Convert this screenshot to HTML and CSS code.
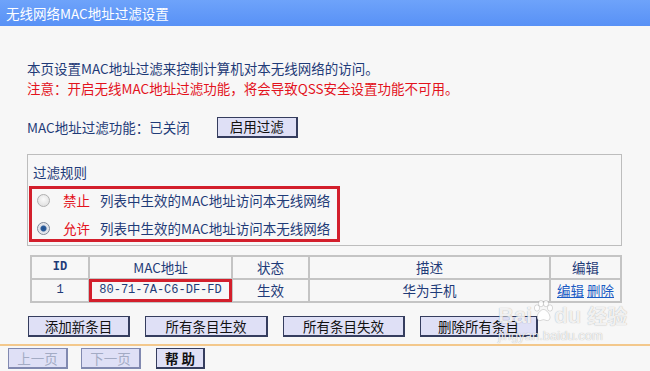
FILE: index.html
```html
<!DOCTYPE html>
<html lang="zh-CN">
<head>
    <meta charset="UTF-8" />
    <title>无线网络MAC地址过滤设置</title>
    <link rel="stylesheet" href="styles.css">
</head>
<body>
    <div class="title-bar">无线网络MAC地址过滤设置</div>

    <div class="content">
        <p class="intro">本页设置MAC地址过滤来控制计算机对本无线网络的访问。</p>
        <p class="warn">注意：开启无线MAC地址过滤功能，将会导致QSS安全设置功能不可用。</p>

        <div class="status-row">
            <span>MAC地址过滤功能：已关闭</span>
            <button class="btn btn-enable">启用过滤</button>
        </div>

        <div class="rules">
            <div class="rules-title">过滤规则</div>
            <div class="rules-options">
                <label class="opt"><span class="radio"></span><span class="verb">禁止</span>列表中生效的MAC地址访问本无线网络</label>
                <label class="opt"><span class="radio checked"></span><span class="verb">允许</span>列表中生效的MAC地址访问本无线网络</label>
            </div>
        </div>

        <table class="mac-table">
            <tr>
                <th class="col-id mono">ID</th>
                <th class="col-mac">MAC地址</th>
                <th class="col-state">状态</th>
                <th class="col-desc">描述</th>
                <th class="col-edit">编辑</th>
            </tr>
            <tr>
                <td class="mono">1</td>
                <td class="mono mark">80-71-7A-C6-DF-FD</td>
                <td>生效</td>
                <td>华为手机</td>
                <td><a href="#">编辑</a> <a href="#">删除</a></td>
            </tr>
        </table>

        <div class="actions">
            <button class="btn btn-add">添加新条目</button>
            <button class="btn btn-on">所有条目生效</button>
            <button class="btn btn-off">所有条目失效</button>
            <button class="btn btn-del">删除所有条目</button>
        </div>
    </div>

    <div class="footer">
        <button class="btn btn-page" disabled>上一页</button>
        <button class="btn btn-page" disabled>下一页</button>
        <button class="btn btn-help">帮 助</button>
    </div>

    <!-- watermark from the source picture -->
    <div class="watermark">
        <div class="wm-brand">
            <span>Bai</span>
            <svg class="paw" width="22" height="22" viewBox="0 0 22 22">
                <ellipse cx="5" cy="8" rx="2.6" ry="3.2" />
                <ellipse cx="9" cy="3.6" rx="2.6" ry="3.2" />
                <ellipse cx="14" cy="3.6" rx="2.6" ry="3.2" />
                <ellipse cx="18" cy="8" rx="2.6" ry="3.2" />
                <path d="M11.5 9.5c-3 0-6.5 4.5-6.5 8 0 2.5 2 3.5 3.5 3 1.3-.4 2-.8 3-.8s1.7.4 3 .8c1.5.5 3.5-.5 3.5-3 0-3.5-3.5-8-6.5-8z" />
            </svg>
            <span>du</span>
            <span class="wm-cn">经验</span>
        </div>
        <div class="wm-url">jingyan.baidu.com</div>
    </div>
</body>
</html>
```

FILE: styles.css
```css
:root {
    --navy: #1f3b78;
    --red: #e3121c;
    --mark: #d31f2c;
    --grid: #c4c4c4;
    --btn-bg: #dfe0f6;
    --btn-border: #353d5e;
}

body {
    margin: 0;
    background: #f7f7f7;
    font-family: "Noto Sans CJK SC", "Noto Sans", sans-serif;
    font-size: 13.5px;
    color: var(--navy);
    position: relative;
    overflow: hidden;
}

.title-bar {
    height: 26px;
    line-height: 26px;
    padding-left: 6px;
    color: #fff;
    background: linear-gradient(#6ea3fa, #5891f6);
}

.content {
    padding: 32px 0 7px 27px;
}

p {
    margin: 0;
    line-height: 20px;
}

.warn {
    color: var(--red);
}

.status-row {
    display: flex;
    align-items: center;
    gap: 27px;
    margin-top: 19px;
    height: 20px;
}

/* buttons */
.btn {
    box-sizing: border-box;
    height: 21px;
    padding: 0;
    font-family: "Noto Sans CJK SC", sans-serif;
    font-size: 13.5px;
    line-height: 17px;
    color: #111;
    background: var(--btn-bg);
    border: 1px solid var(--btn-border);
    border-width: 1px 2px 2px 1px;
}

.btn-enable { width: 81px; }

/* filter rules box */
.rules {
    box-sizing: border-box;
    width: 595px;
    margin-top: 17px;
    padding: 7px 0 3px 1px;
    border: 1px solid #bdbdbd;
}

.rules-title {
    padding-left: 4px;
    line-height: 20px;
}

.rules-options {
    box-sizing: border-box;
    width: 311px;
    margin-top: 4px;
    border: 3px solid var(--mark);
    display: flex;
    flex-direction: column;
    gap: 6px;
}

.opt {
    display: flex;
    align-items: center;
    height: 22px;
    padding-left: 5px;
}

.radio {
    box-sizing: border-box;
    width: 13px;
    height: 13px;
    border-radius: 50%;
    border: 1px solid #b0b0b0;
    background: radial-gradient(circle at 50% 40%, #fafafa, #dadada);
    margin-right: 13px;
}

.radio.checked {
    border-color: #7f8898;
    background: radial-gradient(circle, #1f4f8e 0, #2d5d9b 2.5px, #dcdfe6 3.5px, #eceef2 6px);
}

.verb {
    color: var(--red);
    margin-right: 10px;
}

/* entry table */
.mac-table {
    width: 592px;
    margin: 9px 0 0 3px;
    border-collapse: collapse;
    table-layout: fixed;
}

.mac-table th,
.mac-table td {
    height: 21px;
    padding: 0;
    text-align: center;
    font-weight: normal;
    border: 2px solid var(--grid);
    line-height: 19px;
}

.col-id { width: 56px; }
.col-mac { width: 141px; }
.col-state { width: 75px; }
.col-desc { width: 239px; }

.mono {
    font-family: "Liberation Mono", monospace;
    font-size: 12px;
}

th.mono {
    font-weight: bold;
}

.mark {
    outline: 3px solid var(--mark);
    outline-offset: -3px;
}

.mac-table a {
    color: #1a5bc4;
}

.actions {
    display: flex;
    gap: 15px;
    margin: 13px 0 0 1px;
}

.btn-add { width: 102px; }
.btn-on { width: 123px; }
.btn-off { width: 122px; }
.btn-del { width: 118px; }

.footer {
    display: flex;
    gap: 13px;
    padding: 2px 0 6px 8px;
    border-top: 2px solid #f3c88c;
}

.btn-page {
    width: 60px;
    color: #a3abc4;
    border-color: #8189b0;
}

.btn-help {
    width: 49px;
    font-weight: bold;
    margin-left: 2px;
}

/* watermark */
.watermark {
    position: absolute;
    left: 498px;
    top: 300px;
    color: rgba(255, 255, 255, 0.85);
    text-shadow: 0 0 1px rgba(0, 0, 0, 0.35);
    font-family: "Liberation Sans", sans-serif;
    pointer-events: none;
}

.wm-brand {
    display: flex;
    align-items: flex-end;
    font-size: 22px;
    font-weight: bold;
    line-height: 24px;
}

.paw {
    fill: rgba(255, 255, 255, 0.85);
    stroke: rgba(0, 0, 0, 0.18);
    stroke-width: 0.8;
    margin-bottom: 6px;
}

.wm-cn {
    margin-left: 6px;
    font-family: "Noto Sans CJK SC", sans-serif;
    font-size: 20px;
}

.wm-url {
    font-size: 13px;
    line-height: 16px;
}
```
